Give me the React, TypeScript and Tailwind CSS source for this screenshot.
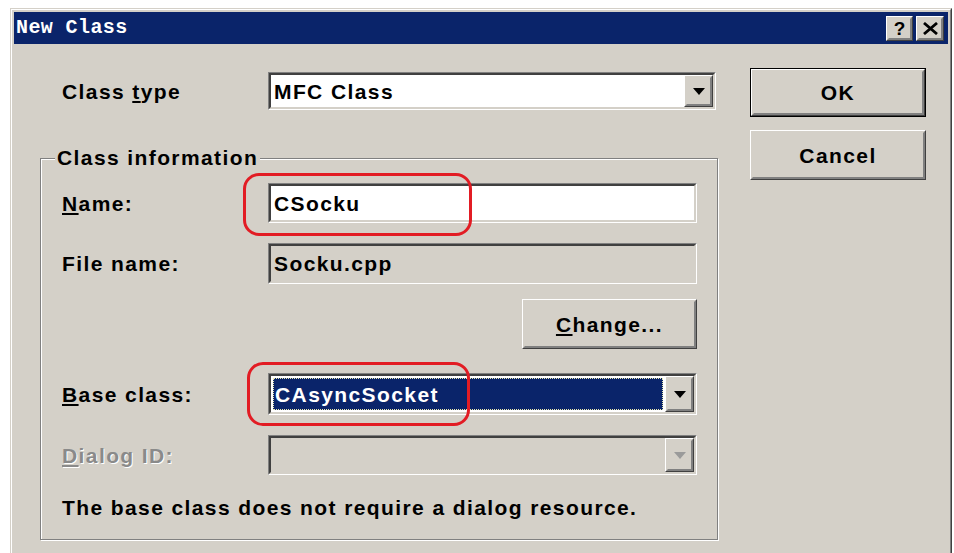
import type { ReactNode } from "react";

const label = "text-[21px] font-bold tracking-[1.4px] text-black leading-none";

function Sunken({ className = "", inner = "bg-white", children }: { className?: string; inner?: string; children?: ReactNode }) {
  return (
    <div className={`border border-t-[#808080] border-l-[#808080] border-b-white border-r-white ${className}`}>
      <div className={`h-full border-2 border-t-[#404040] border-l-[#404040] border-b-[#d4d0c8] border-r-[#d4d0c8] flex items-center ${inner}`}>
        {children}
      </div>
    </div>
  );
}

function Raised({ className = "", children }: { className?: string; children?: ReactNode }) {
  return (
    <div className={`border border-t-white border-l-white border-b-[#404040] border-r-[#404040] bg-[#d4d0c8] ${className}`}>
      <div className="h-full border-2 border-t-[#d4d0c8] border-l-[#d4d0c8] border-b-[#808080] border-r-[#808080] flex items-center justify-center">
        {children}
      </div>
    </div>
  );
}

function Arrow({ color = "#000" }: { color?: string }) {
  return (
    <svg width="12" height="7" viewBox="0 0 12 7">
      <path d="M0 0h12L6 7z" fill={color} />
    </svg>
  );
}

function Combo({ children, disabled = false, inner = "bg-white" }: { children?: ReactNode; disabled?: boolean; inner?: string }) {
  return (
    <Sunken className="h-full w-full" inner={inner}>
      <div className="flex-1 h-full flex items-center min-w-0">{children}</div>
      <Raised className="w-[29px] h-full">
        <Arrow color={disabled ? "#9a9a9a" : "#000"} />
      </Raised>
    </Sunken>
  );
}

function Row({ text, h, children }: { text: ReactNode; h: string; children: ReactNode }) {
  return (
    <div className={`flex items-center ${h}`}>
      <div className={`w-[206px] ${label}`}>{text}</div>
      <div className="w-[429px] h-full">{children}</div>
    </div>
  );
}

export default function App() {
  return (
    <div className="relative h-[553px] w-[954px] overflow-hidden bg-white font-['Liberation_Sans',Arial,sans-serif]">
      <div className="ml-[10px] mt-[8px] w-[942px] h-[600px] border border-t-[#d4d0c8] border-l-[#d4d0c8] border-b-[#404040] border-r-[#404040]">
        <div className="h-full border border-t-white border-l-white border-b-[#808080] border-r-[#808080] bg-[#d4d0c8] p-[2px]">
          {/* title bar */}
          <div className="h-[32px] bg-[#0a246a] flex items-center pl-[2px] pr-[4px]">
            <span className="font-['Liberation_Mono',monospace] text-[20px] font-bold text-white tracking-[0.4px]">New Class</span>
            <div className="ml-auto flex gap-[3px]">
              <Raised className="w-[27px] h-[25px]">
                <span className="text-[19px] font-bold leading-none text-black">?</span>
              </Raised>
              <Raised className="w-[28px] h-[25px]">
                <svg width="15" height="13" viewBox="0 0 15 13">
                  <path d="M1 1l13 11M14 1L1 12" stroke="#000" strokeWidth="2.8" />
                </svg>
              </Raised>
            </div>
          </div>

          {/* body */}
          <div className="flex">
            <div className="ml-[26px] w-[678px]">
              <div className="mt-[28px] h-[38px] flex items-center">
                <div className={`w-[228px] pl-[22px] ${label}`}>
                  Class <span className="underline underline-offset-2">t</span>ype
                </div>
                <div className="w-[448px] h-full">
                  <Combo>
                    <span className={`${label} pl-[3px]`}>MFC Class</span>
                  </Combo>
                </div>
              </div>

              <div className="relative mt-[48px] h-[382px] border border-[#808080] shadow-[inset_1px_1px_0_#fff,1px_1px_0_#fff]">
                <span className={`absolute left-[14px] top-[-12px] bg-[#d4d0c8] px-[2px] ${label}`}>Class information</span>
                <div className="pl-[21px] pt-[24px] flex flex-col">
                  <Row h="h-[40px]" text={<><span className="underline underline-offset-2">N</span>ame:</>}>
                    <Sunken className="h-full">
                      <span className={`${label} pl-[3px]`}>CSocku</span>
                    </Sunken>
                  </Row>
                  <div className="mt-[20px]">
                    <Row h="h-[41px]" text="File name:">
                      <Sunken className="h-full" inner="bg-[#d4d0c8]">
                        <span className={`${label} pl-[3px]`}>Socku.cpp</span>
                      </Sunken>
                    </Row>
                  </div>
                  <div className="mt-[15px] h-[50px] flex">
                    <Raised className="ml-[460px] w-[175px] h-full">
                      <span className={label}>
                        <span className="underline underline-offset-2">C</span>hange...
                      </span>
                    </Raised>
                  </div>
                  <div className="mt-[24px]">
                    <Row h="h-[42px]" text={<><span className="underline underline-offset-2">B</span>ase class:</>}>
                      <Combo>
                        <div className="ml-[2px] mr-[2px] h-[32px] flex-1 bg-[#0a246a] border border-dotted border-[#e8e8b0] flex items-center">
                          <span className={`${label} text-white pl-[1px]`}>CAsyncSocket</span>
                        </div>
                      </Combo>
                    </Row>
                  </div>
                  <div className="mt-[20px]">
                    <Row
                      h="h-[40px]"
                      text={
                        <span className="text-[#8a8a8a] [text-shadow:1px_1px_0_#fff]">
                          <span className="underline underline-offset-2">D</span>ialog ID:
                        </span>
                      }
                    >
                      <Combo disabled inner="bg-[#d4d0c8]" />
                    </Row>
                  </div>
                  <div className={`mt-[22px] ${label}`}>The base class does not require a dialog resource.</div>
                </div>
              </div>
            </div>

            <div className="ml-[32px] w-[176px] flex flex-col">
              <div className="mt-[24px] h-[49px] border border-black">
                <Raised className="h-full">
                  <span className={label}>OK</span>
                </Raised>
              </div>
              <Raised className="mt-[13px] h-[50px]">
                <span className={label}>Cancel</span>
              </Raised>
            </div>
          </div>
        </div>
      </div>

      {/* red annotation outlines */}
      <div className="absolute left-[243px] top-[173px] w-[229px] h-[63px] rounded-[16px] border-[3px] border-[#e21c24]" />
      <div className="absolute left-[247px] top-[362px] w-[223px] h-[64px] rounded-[16px] border-[3px] border-[#e21c24]" />
    </div>
  );
}
